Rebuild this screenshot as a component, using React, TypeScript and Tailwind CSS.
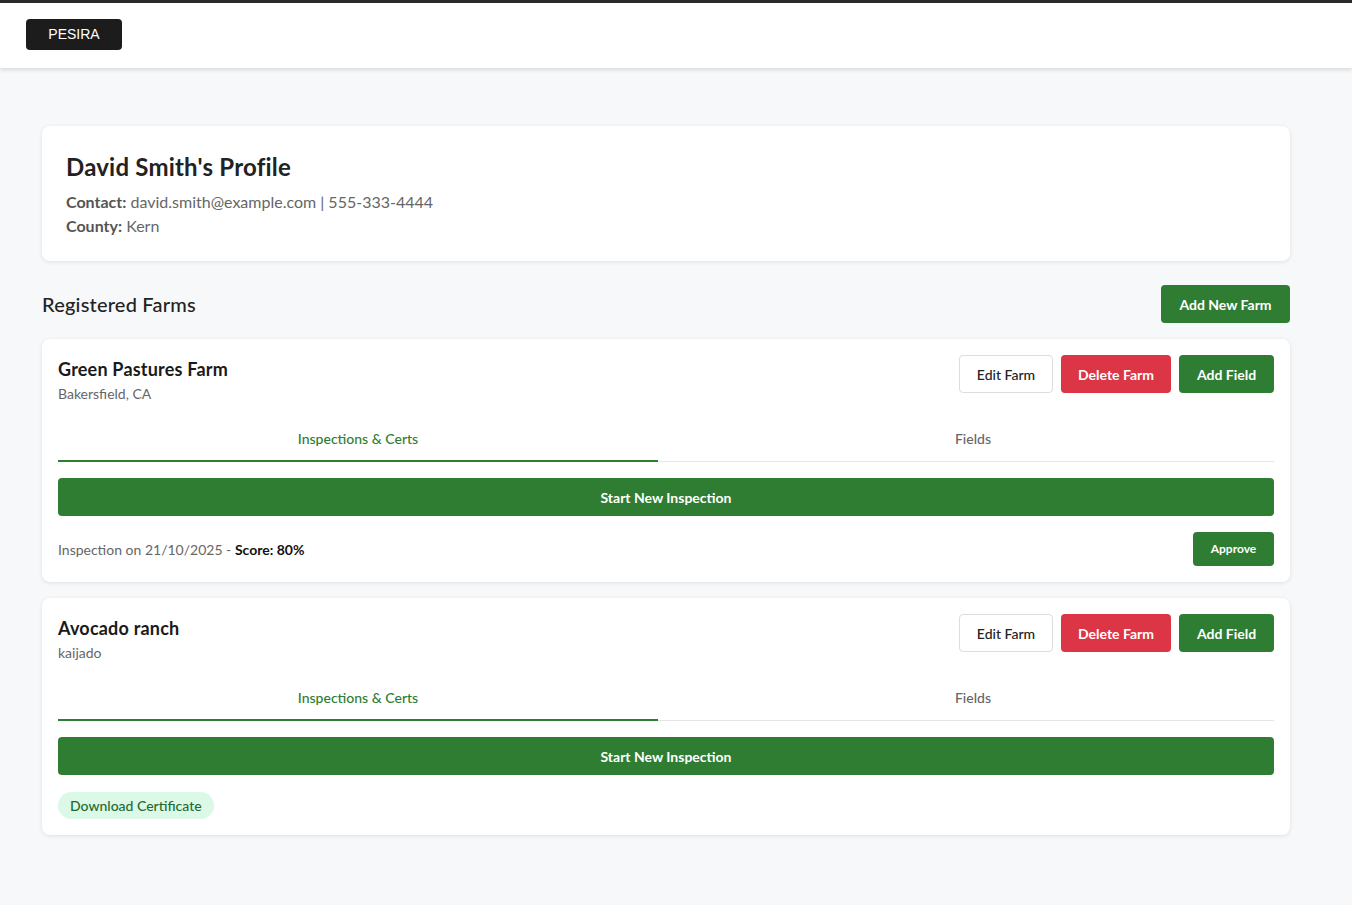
import React from "react";

const font = { fontFamily: '"Lato", "Noto Sans", sans-serif' };

function FarmCard({
  name,
  location,
  children,
}: {
  name: string;
  location: string;
  children: React.ReactNode;
}) {
  return (
    <div className="bg-white rounded-lg shadow-[0_1px_4px_rgba(0,0,0,0.1)] p-4">
      <div className="flex justify-between items-start">
        <div>
          <h3 className="text-[18px] leading-[27px] font-bold text-[#1a1a1a] pt-px tracking-[0.2px]">{name}</h3>
          <p className="text-[14px] leading-[21px] text-[#666]">{location}</p>
        </div>
        <div className="flex gap-2">
          <button className="h-[38px] w-[94px] rounded border border-[#ddd] bg-white text-[14px] font-medium text-[#222]">
            Edit Farm
          </button>
          <button className="h-[38px] w-[110px] rounded bg-[#dc3545] text-[14px] font-bold text-white">
            Delete Farm
          </button>
          <button className="h-[38px] w-[95px] rounded bg-[#2e7d32] text-[14px] font-bold text-white">
            Add Field
          </button>
        </div>
      </div>
      <div className="mt-4 flex border-b border-[#e5e5e5]">
        <button className="w-[600px] -mb-px h-[42px] border-b-2 border-[#2e7d32] text-[14px] text-[#2e7d32] font-medium pb-[4px]">
          Inspections &amp; Certs
        </button>
        <button className="flex-1 -mb-px h-[42px] border-b-2 border-transparent text-[14px] text-[#666] font-medium pb-[4px] pl-[14px]">
          Fields
        </button>
      </div>
      <button className="mt-4 w-full h-[38px] rounded bg-[#2e7d32] text-white text-[14px] font-bold">
        Start New Inspection
      </button>
      {children}
    </div>
  );
}

export default function App() {
  return (
    <div className="min-h-[905px] bg-[#f7f8fa]" style={font}>
      <div className="h-[3px] bg-[#2b2b2b]" />
      <header className="h-[65px] bg-white shadow-[0_2px_4px_rgba(0,0,0,0.12)] pl-[26px] pt-4 relative">
        <button
          className="h-[31px] w-[96px] rounded bg-[#1c1c1c] text-white text-[14px]"
          style={{ fontFamily: '"Liberation Sans", Arial, sans-serif' }}
        >
          PESIRA
        </button>
      </header>
      <main className="ml-[42px] w-[1248px] pt-[58px] pb-16">
        <div className="bg-white rounded-lg shadow-[0_1px_4px_rgba(0,0,0,0.1)] px-6 pt-[25px] pb-[23px]">
          <h1 className="text-[24px] leading-[32px] font-bold text-[#222] mb-[7px] tracking-[0.2px]">David Smith's Profile</h1>
          <p className="text-[16px] leading-[24px] text-[#666]">
            <span className="font-bold text-[#555]">Contact:</span> david.smith@example.com | 555-333-4444
          </p>
          <p className="text-[16px] leading-[24px] text-[#666]">
            <span className="font-bold text-[#555]">County:</span> Kern
          </p>
        </div>

        <div className="mt-6 flex justify-between items-center">
          <h2 className="text-[20px] text-[#222] font-medium tracking-[0.2px]">Registered Farms</h2>
          <button className="h-[38px] w-[129px] rounded bg-[#2e7d32] text-white text-[14px] font-bold">
            Add New Farm
          </button>
        </div>

        <div className="mt-4 flex flex-col gap-4">
          <FarmCard name="Green Pastures Farm" location="Bakersfield, CA">
            <div className="mt-4 flex justify-between items-center">
              <p className="text-[14px] text-[#666]">
                Inspection on 21/10/2025 - <span className="font-bold text-[#111]">Score: 80%</span>
              </p>
              <button className="h-[34px] w-[81px] rounded bg-[#2e7d32] text-white text-[12px] font-bold">
                Approve
              </button>
            </div>
          </FarmCard>
          <FarmCard name="Avocado ranch" location="kaijado">
            <div className="mt-[17px] flex">
              <span className="h-[27px] px-3 inline-flex items-center rounded-full bg-[#dcf8e6] text-[#1f6b2e] text-[14px] font-medium">
                Download Certificate
              </span>
            </div>
          </FarmCard>
        </div>
      </main>
    </div>
  );
}
